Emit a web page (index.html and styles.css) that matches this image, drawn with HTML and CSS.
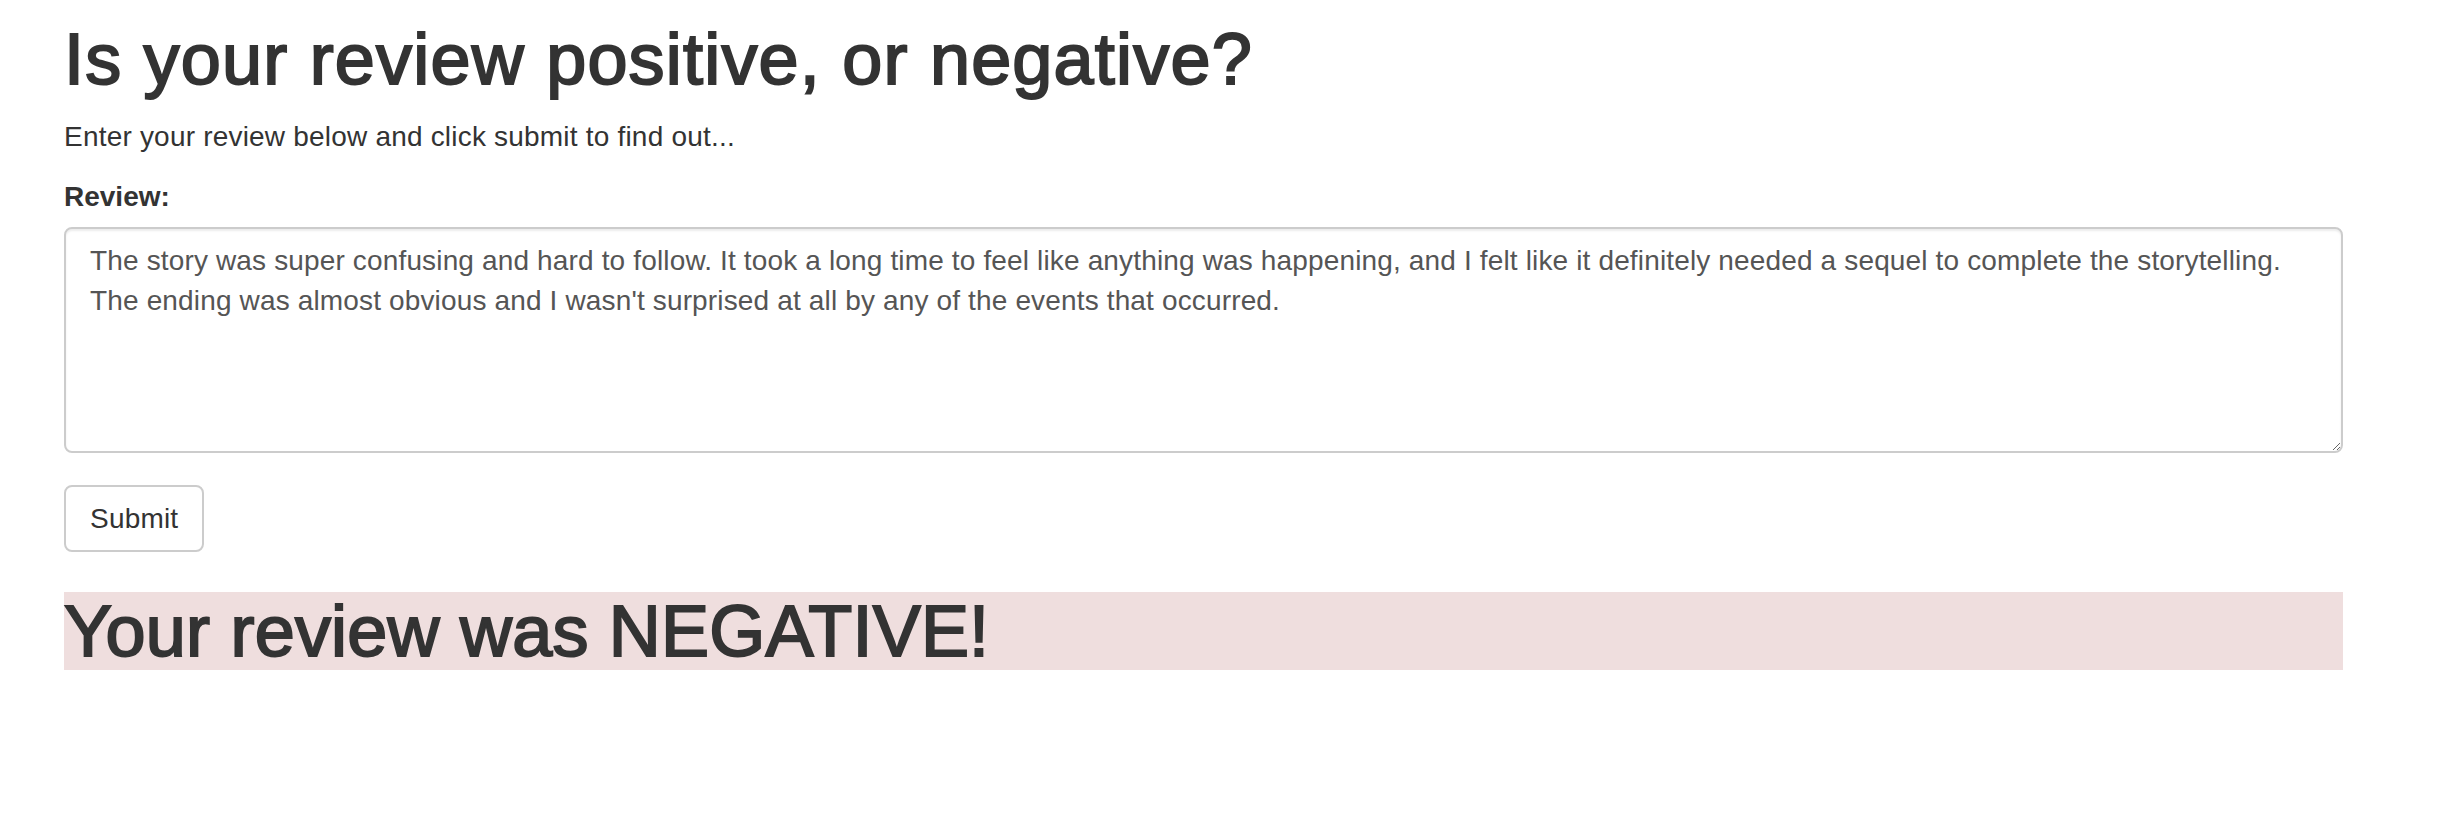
FILE: index.html
```html
<!DOCTYPE html>
<html lang="en">
<head>
<meta charset="utf-8">
<title>Review sentiment</title>
<link rel="stylesheet" href="styles.css">
</head>
<body>
<div class="container">
  <h1 class="title">Is your review positive, or negative?</h1>
  <p class="lead-text">Enter your review below and click submit to find out...</p>
  <form class="review-form">
    <div class="form-group">
      <label class="form-label" for="review">Review:</label>
      <textarea class="form-control" id="review" rows="5">The story was super confusing and hard to follow. It took a long time to feel like anything was happening, and I felt like it definitely needed a sequel to complete the storytelling.
The ending was almost obvious and I wasn't surprised at all by any of the events that occurred.</textarea>
    </div>
    <button type="button" class="btn">Submit</button>
  </form>
  <h1 class="result bg-danger">Your review was NEGATIVE!</h1>
</div>
</body>
</html>
```

FILE: styles.css
```css
* {
  box-sizing: border-box;
}

html, body {
  margin: 0;
  padding: 0;
  background: #fff;
}

body {
  font-family: "Liberation Sans", Arial, Helvetica, sans-serif;
  font-size: 28px;
  line-height: 40px;
  color: #333;
  letter-spacing: 0.2px;
}

.container {
  width: 2279px;
  margin-left: 64px;
}

.title {
  font-size: 72px;
  font-weight: 400;
  line-height: 1.1;
  margin: 20px 0 18px;
  letter-spacing: 1.2px;
  -webkit-text-stroke: 2px #333;
}

.lead-text {
  margin: 0 0 20px;
}

.review-form {
  margin: 0;
}

.form-group {
  margin-bottom: 32px;
}

.form-label {
  display: inline-block;
  font-weight: 700;
  margin-bottom: 10px;
  letter-spacing: 0;
}

.form-control {
  display: block;
  width: 100%;
  height: 226px;
  padding: 12px 24px;
  font-family: inherit;
  font-size: 28px;
  line-height: 40px;
  letter-spacing: 0.15px;
  color: #555;
  background: #fff;
  border: 2px solid #ccc;
  border-radius: 8px;
  box-shadow: inset 0 2px 2px rgba(0, 0, 0, 0.075);
  resize: vertical;
  margin: 0;
}

.btn {
  display: inline-block;
  height: 67px;
  padding: 12px 24px;
  font-family: inherit;
  font-size: 28px;
  line-height: 40px;
  letter-spacing: 0.2px;
  color: #333;
  background: #fff;
  border: 2px solid #ccc;
  border-radius: 8px;
  margin: 0;
  cursor: pointer;
}

.result {
  font-size: 72px;
  font-weight: 400;
  line-height: 78px;
  margin: 40px 0 20px;
  letter-spacing: 0.2px;
  -webkit-text-stroke: 2px #333;
}

.bg-danger {
  background-color: #efdede;
}
```
